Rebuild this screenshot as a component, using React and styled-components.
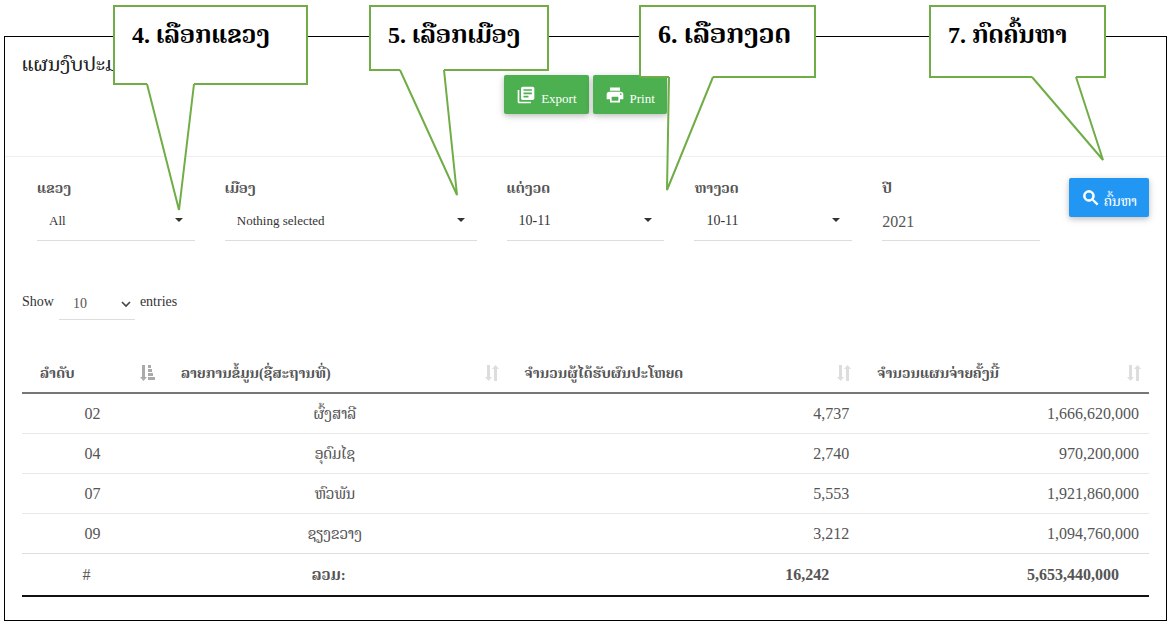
import React from 'react';
import styled, { createGlobalStyle } from 'styled-components';
import { MdLibraryBooks, MdPrint, MdSearch } from 'react-icons/md';

const GlobalStyle = createGlobalStyle`
  * {
    box-sizing: border-box;
  }

  body {
    margin: 0;
    background: #fff;
    color: #333;
    font-family: 'Liberation Serif', 'Noto Serif Lao', 'Noto Sans Lao', 'DejaVu Sans', serif;
    font-size: 14px;
  }

  button,
  input,
  select {
    font-family: inherit;
  }
`;

const Page = styled.div`
  position: relative;
  padding: 36px 4px 0;
`;

const Card = styled.main`
  border: 1px solid #000;
`;

const Header = styled.header`
  height: 120px;
  padding: 16px 17px 0;
  border-bottom: 1px solid #eee;
`;

const Title = styled.h1`
  margin: 0;
  font-size: 20px;
  line-height: 22px;
  font-weight: 400;
  color: #222;
`;

const Actions = styled.div`
  display: flex;
  justify-content: center;
  gap: 4px;
`;

const Button = styled.button`
  display: inline-flex;
  align-items: center;
  gap: ${({ $gap }) => $gap || 5}px;
  height: 39px;
  padding: 0 12px;
  border: none;
  border-radius: 2px;
  background: ${({ $color }) => $color};
  color: #fff;
  font-size: ${({ $size }) => $size || 13}px;
  white-space: nowrap;
  cursor: pointer;
  box-shadow: 0 2px 5px rgba(0, 0, 0, 0.16), 0 2px 10px rgba(0, 0, 0, 0.12);

  span {
    padding-top: 8px;
  }
`;

const Filters = styled.form`
  display: grid;
  grid-template-columns:
    minmax(0, 2fr) minmax(0, 3fr) repeat(3, minmax(0, 2fr))
    minmax(0, 1fr);
  padding: 21px 17px 0;
`;

const Field = styled.div`
  padding: 0 15px;
`;

const Label = styled.label`
  display: block;
  height: 22px;
  font-size: 14px;
  line-height: 22px;
  font-weight: 700;
  color: #555;
`;

const SelectBox = styled.div`
  position: relative;
  border-bottom: 1px solid #ddd;

  svg {
    position: absolute;
    right: 12px;
    top: 18px;
    pointer-events: none;
  }
`;

const Select = styled.select`
  display: block;
  width: 100%;
  height: 40px;
  padding: 0 12px;
  border: none;
  background: transparent;
  appearance: none;
  font-size: ${({ $size }) => $size || 14}px;
  color: #333;
`;

const TextInput = styled.input`
  display: block;
  width: 100%;
  height: 41px;
  padding: 4px 0 0;
  border: none;
  border-bottom: 1px solid #ddd;
  font-size: 16px;
  color: #555;
`;

const SearchCell = styled.div`
  padding-left: 14px;
`;

const Length = styled.div`
  display: flex;
  padding: 46px 17px 0;
  line-height: 30px;
`;

const LengthLabel = styled.label`
  display: flex;
  gap: 5px;
`;

const LengthSelect = styled.div`
  position: relative;
  width: 76px;
  border-bottom: 1px solid #ddd;

  select {
    height: 32px;
    padding-left: 14px;
    color: #555;
  }

  svg {
    position: absolute;
    right: 4px;
    top: 14px;
    pointer-events: none;
  }
`;

const TableWrap = styled.div`
  padding: 31px 17px 23px;
`;

const Table = styled.table`
  width: 100%;
  table-layout: fixed;
  border-collapse: separate;
  border-spacing: 0;
  border-bottom: 2px solid #111;
  font-size: 16px;
  color: #555;
`;

const HeadCell = styled.th`
  width: ${({ $width }) => $width};
  height: 43px;
  padding: 3px 8px 0 18px;
  border-bottom: 2px solid #777;
  font-size: 14px;
  text-align: left;

  div {
    display: flex;
    align-items: center;
    justify-content: space-between;
  }
`;

const Cell = styled.td`
  height: ${({ $last }) => ($last ? 39 : 40)}px;
  padding: 0 10px;
  border-bottom: ${({ $last }) => ($last ? 'none' : '1px solid #e8e8e8')};
  font-size: ${({ $name }) => ($name ? 15 : 16)}px;
  text-align: ${({ $align }) => $align || 'center'};
`;

const FootCell = styled.td`
  height: 42px;
  padding: 0 30px 0 18px;
  border-top: 1px solid #ddd;
  font-size: ${({ $name }) => ($name ? 15 : 16)}px;
  font-weight: ${({ $plain }) => ($plain ? 400 : 700)};
  text-align: ${({ $align }) => $align || 'center'};
`;

const Callout = styled.aside`
  position: absolute;
  top: 5px;
  left: ${({ $left }) => $left}px;
  width: ${({ $width }) => $width}px;
  height: ${({ $height }) => $height}px;
  padding: 11px 0 0 17px;
  border: 2px solid #70ad47;
  background: #fff;
  color: #000;
  font-size: ${({ $size }) => $size || 24}px;
  line-height: 34px;
  font-weight: 700;
  white-space: nowrap;

  svg {
    position: absolute;
    left: -2px;
    top: 100%;
    overflow: visible;
    pointer-events: none;
  }
`;

const SearchIcon = styled(MdSearch)`
  path:last-child {
    stroke: currentColor;
    stroke-width: 1;
  }
`;

const Caret = () => (
  <svg width="8" height="4" viewBox="0 0 8 4" aria-hidden="true">
    <path d="M0 0h8L4 4z" fill="#333" />
  </svg>
);

const Chevron = () => (
  <svg width="10" height="7" viewBox="0 0 10 7" aria-hidden="true">
    <path d="M1 1l4 4 4-4" fill="none" stroke="#444" strokeWidth="1.6" />
  </svg>
);

const SortIcon = ({ active }) =>
  active ? (
    <svg width="15" height="16" viewBox="0 0 15 16" aria-hidden="true">
      <path
        d="M2 0h3v12h2L3.5 16 0 12h2zM8 0h3v3H8zM8 4h4v3H8zM8 8h5v3H8zM8 12h7v3H8z"
        fill="#aaa"
      />
    </svg>
  ) : (
    <svg width="14" height="16" viewBox="0 0 14 16" aria-hidden="true">
      <path
        d="M2 0h3v12h2L3.5 16 0 12h2zM9 16h3V4h2L10.5 0 7 4h2z"
        fill="#ddd"
      />
    </svg>
  );

// points are measured from the left end of the box's bottom border
const callouts = [
  { text: '4. ເລືອກແຂວງ', left: 113, width: 195, height: 80, from: 34, to: 81, tip: [66, 127] },
  { text: '5. ເລືອກເມືອງ', left: 369, width: 180, height: 66, from: 31, to: 75, tip: [88, 126] },
  { text: '6. ເລືອກງວດ', left: 639, width: 177, height: 73, size: 26, from: 30, to: 74, tip: [28, 114] },
  { text: '7. ກົດຄົ້ນຫາ', left: 929, width: 177, height: 73, from: 103, to: 147, tip: [174, 84] },
];

const selects = [
  { id: 'province', label: 'ແຂວງ', value: 'All', size: 13 },
  { id: 'district', label: 'ເມືອງ', value: 'Nothing selected', size: 13 },
  { id: 'from', label: 'ແຕ່ງວດ', value: '10-11' },
  { id: 'to', label: 'ຫາງວດ', value: '10-11' },
];

const columns = [
  { label: 'ລຳດັບ', width: '12.5%' },
  { label: 'ລາຍການຂໍ້ມູນ(ຊື່ສະຖານທີ່)', width: '30.5%' },
  { label: 'ຈຳນວນຜູ້ໄດ້ຮັບຜົນປະໂຫຍດ', width: '31.3%' },
  { label: 'ຈຳນວນແຜນຈ່າຍຄັ້ງນີ້', width: '25.7%' },
];

const rows = [
  ['02', 'ຜົ້ງສາລີ', '4,737', '1,666,620,000'],
  ['04', 'ອຸດົມໄຊ', '2,740', '970,200,000'],
  ['07', 'ຫົວພັນ', '5,553', '1,921,860,000'],
  ['09', 'ຊຽງຂວາງ', '3,212', '1,094,760,000'],
];

const App = () => {
  return (
    <Page>
      <GlobalStyle />
      <Card>
        <Header>
          <Title>ແຜນງົບປະມານ</Title>
          <Actions>
            <Button type="button" $color="#4caf50">
              <MdLibraryBooks size={20} />
              <span>Export</span>
            </Button>
            <Button type="button" $color="#4caf50">
              <MdPrint size={20} />
              <span>Print</span>
            </Button>
          </Actions>
        </Header>

        <Filters onSubmit={(e) => e.preventDefault()}>
          {selects.map(({ id, label, value, size }) => (
            <Field key={id}>
              <Label htmlFor={id}>{label}</Label>
              <SelectBox>
                <Select id={id} $size={size}>
                  <option>{value}</option>
                </Select>
                <Caret />
              </SelectBox>
            </Field>
          ))}
          <Field>
            <Label htmlFor="year">ປີ</Label>
            <TextInput id="year" type="text" defaultValue="2021" />
          </Field>
          <SearchCell>
            <Button type="submit" $color="#2196f3" $gap={3} $size={14}>
              <SearchIcon size={20} />
              <span>ຄົ້ນຫາ</span>
            </Button>
          </SearchCell>
        </Filters>

        <Length>
          <LengthLabel>
            Show
            <LengthSelect>
              <Select>
                <option>10</option>
              </Select>
              <Chevron />
            </LengthSelect>
            entries
          </LengthLabel>
        </Length>

        <TableWrap>
          <Table>
            <thead>
              <tr>
                {columns.map(({ label, width }, i) => (
                  <HeadCell key={label} $width={width}>
                    <div>
                      {label}
                      <SortIcon active={i === 0} />
                    </div>
                  </HeadCell>
                ))}
              </tr>
            </thead>
            <tbody>
              {rows.map((row, r) => (
                <tr key={row[0]}>
                  {row.map((value, i) => (
                    <Cell
                      key={i}
                      $last={r === rows.length - 1}
                      $name={i === 1}
                      $align={i > 1 ? 'right' : 'center'}
                    >
                      {value}
                    </Cell>
                  ))}
                </tr>
              ))}
            </tbody>
            <tfoot>
              <tr>
                <FootCell $plain>#</FootCell>
                <FootCell $name>ລວມ:</FootCell>
                <FootCell $align="right">16,242</FootCell>
                <FootCell $align="right">5,653,440,000</FootCell>
              </tr>
            </tfoot>
          </Table>
        </TableWrap>
      </Card>

      {callouts.map(({ text, left, width, height, size, from, to, tip }) => (
        <Callout key={text} $left={left} $width={width} $height={height} $size={size}>
          {text}
          <svg width={width} height={tip[1]} aria-hidden="true">
            <path
              d={`M${from} 0V1L${tip[0]} ${tip[1]}L${to} 1V0z`}
              fill="#fff"
            />
            <path
              d={`M${from} 1L${tip[0]} ${tip[1]}L${to} 1`}
              fill="none"
              stroke="#70ad47"
              strokeWidth="2"
            />
          </svg>
        </Callout>
      ))}
    </Page>
  );
};

export default App;
